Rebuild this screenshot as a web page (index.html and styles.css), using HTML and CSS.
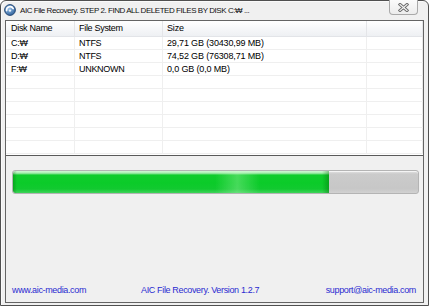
FILE: index.html
```html
<!DOCTYPE html>
<html>
<head>
<meta charset="utf-8">
<link rel="stylesheet" href="styles.css">
</head>
<body>
<div class="window">
  <div class="titlebar">
    <svg class="appicon" width="12" height="12" viewBox="0 0 12 12">
      <defs>
        <radialGradient id="ig" cx="40%" cy="35%" r="70%">
          <stop offset="0" stop-color="#9cc3ea"/>
          <stop offset="1" stop-color="#2c5f9a"/>
        </radialGradient>
      </defs>
      <circle cx="6" cy="6" r="5.4" fill="url(#ig)" stroke="#1d3f6c" stroke-width="0.9"/>
      <path d="M2.6 6.6 A3.5 3.5 0 0 1 9.2 4.6" fill="none" stroke="#ffffff" stroke-width="1.6" stroke-linecap="round"/>
      <circle cx="6" cy="6.6" r="1.2" fill="#e8f2fc"/>
    </svg>
    <span class="title">AIC File Recovery. STEP 2. FIND ALL DELETED FILES BY DISK C:₩ ...</span>
    <div class="close">
      <svg width="11" height="9" viewBox="0 0 11 9">
        <path d="M2 1.5 L9 7.5 M9 1.5 L2 7.5" stroke="#6a6a6a" stroke-width="3" stroke-linecap="square"/>
        <path d="M2 1.5 L9 7.5 M9 1.5 L2 7.5" stroke="#f4f4f4" stroke-width="1.2" stroke-linecap="square"/>
      </svg>
    </div>
  </div>
  <div class="client">
    <div class="list">
      <div class="row head"><div class="c c1">Disk Name</div><div class="c c2">File System</div><div class="c c3">Size</div><div class="c c4"></div></div>
      <div class="row"><div class="c c1">C:₩</div><div class="c c2">NTFS</div><div class="c c3">29,71 GB (30430,99 MB)</div><div class="c c4"></div></div>
      <div class="row"><div class="c c1">D:₩</div><div class="c c2">NTFS</div><div class="c c3">74,52 GB (76308,71 MB)</div><div class="c c4"></div></div>
      <div class="row"><div class="c c1">F:₩</div><div class="c c2">UNKNOWN</div><div class="c c3">0,0 GB (0,0 MB)</div><div class="c c4"></div></div>
      <div class="row"><div class="c c1"></div><div class="c c2"></div><div class="c c3"></div><div class="c c4"></div></div>
      <div class="row"><div class="c c1"></div><div class="c c2"></div><div class="c c3"></div><div class="c c4"></div></div>
      <div class="row"><div class="c c1"></div><div class="c c2"></div><div class="c c3"></div><div class="c c4"></div></div>
      <div class="row"><div class="c c1"></div><div class="c c2"></div><div class="c c3"></div><div class="c c4"></div></div>
      <div class="row"><div class="c c1"></div><div class="c c2"></div><div class="c c3"></div><div class="c c4"></div></div>
      <div class="row"><div class="c c1"></div><div class="c c2"></div><div class="c c3"></div><div class="c c4"></div></div>
    </div>
    <div class="panel">
      <div class="progress"><div class="fill" style="width:78%"></div></div>
      <div class="footer">
        <span class="link">www.aic-media.com</span>
        <span class="link">AIC File Recovery. Version 1.2.7</span>
        <span class="link">support@aic-media.com</span>
      </div>
    </div>
  </div>
</div>
</body>
</html>
```

FILE: styles.css
```css
* { box-sizing: border-box; }
html, body { margin: 0; padding: 0; background: #ffffff; }
body {
  font-family: "Liberation Sans", Arial, sans-serif;
  font-size: 9px;
  letter-spacing: -0.3px;
  color: #000;
}
.window {
  width: 429px;
  height: 306px;
  border: 1px solid #505050;
  border-radius: 6px 6px 0 0;
  background: #f0f0f0;
  padding: 0 4px 2px 4px;
  display: flex;
  flex-direction: column;
  box-shadow: inset 1px 1px 0 #fafafa;
}
.titlebar {
  height: 19px;
  display: flex;
  align-items: center;
  padding-right: 6px;
}
.appicon { flex: none; margin-left: -1px; margin-top: -2px; }
.title {
  margin-left: 4px;
  margin-top: -1px;
  font-size: 8px;
  letter-spacing: -0.45px;
  white-space: nowrap;
  color: #111;
}
.close {
  margin-left: auto;
  align-self: flex-start;
  margin-top: -1px;
  width: 29px;
  height: 15px;
  border: 1px solid #a9a9a9;
  border-top: none;
  border-radius: 0 0 4px 4px;
  background: linear-gradient(#fbfbfb, #ececec);
  display: flex;
  align-items: center;
  justify-content: center;
}
.client {
  flex: 1;
  border: 1px solid #646464;
  display: flex;
  flex-direction: column;
}
.list {
  height: 135px;
  flex: none;
  background: #fff;
  border-bottom: 1px solid #5a5a5a;
  overflow: hidden;
}
.row {
  display: flex;
  height: 13px;
  border-bottom: 1px solid #efefef;
}
.row.head {
  height: 16px;
  background: linear-gradient(#ffffff, #f6f7f9 50%, #eef0f3);
  border-bottom: 1px solid #e2e4e8;
}
.c {
  line-height: 12px;
  padding-left: 4px;
  white-space: nowrap;
  border-right: 1px solid #efefef;
}
.head .c { line-height: 15px; border-right-color: #e4e5e8; }
.c1 { width: 69px; padding-left: 5px; }
.c2 { width: 88px; }
.c3 { width: 204px; letter-spacing: -0.15px; }
.c4 { flex: 1; border-right-color: #e8e8e8; }
.panel {
  flex: 1;
  display: flex;
  flex-direction: column;
  padding: 14px 4px 6px 6px;
}
.progress {
  height: 24px;
  border: 1px solid #b4b4b4;
  border-radius: 3px;
  background: linear-gradient(#e6e6e6, #cbcbcb 3px, #c7c7c7 80%, #d2d2d2);
  box-shadow: inset 0 1px 0 #f4f4f4;
  overflow: hidden;
}
.fill {
  height: 100%;
  border-radius: 2px 0 0 2px;
  background:
    linear-gradient(to right, rgba(200,255,200,0) 64%, rgba(200,255,200,0.3) 71%, rgba(200,255,200,0) 78%),
    linear-gradient(to right, rgba(0,70,0,0.28), rgba(0,70,0,0) 4px, rgba(0,70,0,0) calc(100% - 7px), rgba(0,90,0,0.35)),
    linear-gradient(#d2f8d6 0, #a8eeb0 2px, #6ade7c 3px, #10cc2c 4px, #0bcb29 55%, #12c930 82%, #3fd45a 100%);
}
.footer {
  margin-top: auto;
  display: grid;
  grid-template-columns: 129px 1fr auto;
  line-height: 12px;
  padding-right: 3px;
  letter-spacing: -0.35px;
}
.link { color: #2b2bd1; white-space: nowrap; }
```
